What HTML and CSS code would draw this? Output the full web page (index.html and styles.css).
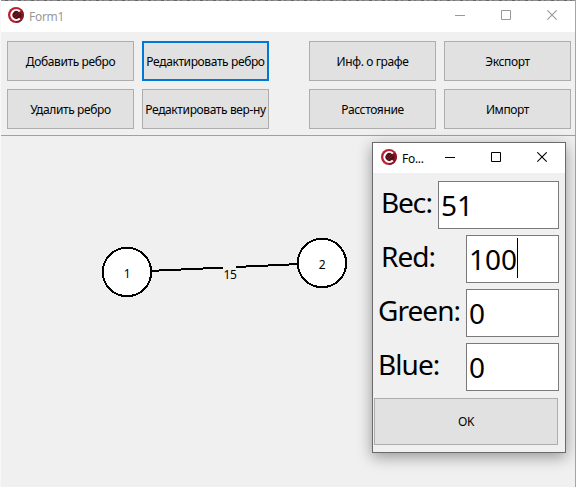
FILE: index.html
```
<!DOCTYPE html>
<html lang="ru">
<head>
<meta charset="utf-8">
<title>Form1</title>
<link rel="stylesheet" href="styles.css">
</head>
<body>
<svg width="0" height="0" class="defs">
  <symbol id="logo" viewBox="0 0 16 16">
    <circle cx="8" cy="8" r="8" fill="#b8202f"/>
    <path d="M14 3A8 8 0 0 1 8 16L8 13z" fill="#8a1624"/>
    <circle cx="9" cy="8" r="4.4" fill="#4d1018"/>
    <path d="M11.8 4.4A5 5 0 1 0 11.8 11.6" fill="none" stroke="#fff" stroke-width="2.1"/>
    <path d="M6 9l4-4M7 11l5-5" stroke="#8e2732" stroke-width=".7"/>
  </symbol>
  <symbol id="min" viewBox="0 0 11 11"><path d="M0 5.5H10" stroke="currentColor"/></symbol>
  <symbol id="max" viewBox="0 0 11 11"><path d="M.5 .5H9.5V9.5H.5z" fill="none" stroke="currentColor"/></symbol>
  <symbol id="close" viewBox="0 0 11 11"><path d="M.3 .3L9.7 9.7M9.7 .3L.3 9.7" stroke="currentColor" stroke-width="1.1"/></symbol>
</svg>
<div class="window">
  <header class="titlebar">
    <svg class="logo"><use href="#logo"/></svg>
    <span class="title">Form1</span>
    <div class="controls">
      <svg><use href="#min"/></svg><svg><use href="#max"/></svg><svg><use href="#close"/></svg>
    </div>
  </header>
  <section class="toolbar">
    <button><span>Добавить ребро</span></button>
    <button class="focused"><span>Редактировать ребро</span></button>
    <button class="third"><span>Инф. о графе</span></button>
    <button><span>Экспорт</span></button>
    <button><span>Удалить ребро</span></button>
    <button><span>Редактировать вер-ну</span></button>
    <button class="third"><span>Расстояние</span></button>
    <button><span>Импорт</span></button>
  </section>
  <svg class="graph" viewBox="1 136 574 351">
    <path d="M127 272L322 263" stroke="#000" stroke-width="2" shape-rendering="crispEdges"/>
    <rect x="223" y="265" width="13" height="17" fill="#f0f0f0"/>
    <g fill="#fff" stroke="#000" stroke-width="2" shape-rendering="crispEdges">
      <circle cx="127" cy="272" r="24.2"/><circle cx="322" cy="263" r="24.2"/>
    </g>
    <g class="labels"><text x="127" y="278">1</text><text x="322" y="269">2</text><text x="230" y="279">15</text></g>
  </svg>
</div>
<div class="dialog">
  <header class="titlebar">
    <svg class="logo"><use href="#logo"/></svg>
    <span class="title">Fo...</span>
    <div class="controls">
      <svg><use href="#min"/></svg><svg><use href="#max"/></svg><svg><use href="#close"/></svg>
    </div>
  </header>
  <div class="fields">
    <div class="row weight"><label>Вес:</label><div class="input">51</div></div>
    <div class="row red"><label>Red:</label><div class="input">100<i class="caret"></i></div></div>
    <div class="row green"><label>Green:</label><div class="input">0</div></div>
    <div class="row blue"><label>Blue:</label><div class="input">0</div></div>
  </div>
  <button class="ok"><span>OK</span></button>
</div>
</body>
</html>
```
FILE: styles.css
```
* { box-sizing: border-box; }
body {
  margin: 0;
  width: 576px;
  height: 487px;
  overflow: hidden;
  background: repeating-linear-gradient(90deg, #8f8c8e 0 5px, #656268 5px 8px, #99969a 8px 11px, #77727a 11px 13px) 0 0 / 100% 1px no-repeat, #f0f0f0;
  font-family: "Noto Sans", "Open Sans", sans-serif;
  color: #000;
}
.defs { position: absolute; }
.window {
  width: 576px;
  height: 487px;
  padding-top: 1px;
  border-right: 1px solid #a5a5a5;
  border-left: 1px solid #f8f8f8;
}
.titlebar {
  display: flex;
  align-items: center;
  height: 31px;
  padding-left: 7px;
  background: #fff;
  color: #999;
  font-size: 12px;
}
.logo { width: 16px; height: 16px; flex: none; margin-top: -3px; }
.title { margin: -1px 0 0 5px; letter-spacing: -.3px; white-space: nowrap; }
.controls { display: flex; gap: 35px; margin: -3px 17px 0 auto; }
.controls svg { width: 11px; height: 11px; display: block; }
.toolbar {
  display: grid;
  grid-template-columns: 127px 127px 159px 127px;
  grid-template-rows: 40px 40px;
  gap: 8px;
  height: 104px;
  padding: 9px 0 0 6px;
  border-bottom: 1px solid #a0a0a0;
}
button {
  display: flex;
  align-items: center;
  justify-content: center;
  padding: 0;
  border: 1px solid #adadad;
  border-radius: 0;
  background: #e1e1e1;
  color: #000;
  font: 12px "Noto Sans", "Open Sans", sans-serif;
  letter-spacing: -.38px;
  white-space: nowrap;
}
.focused { border: 2px solid #0078d7; }
.third { margin-left: 32px; }
.graph { display: block; width: 574px; height: 351px; }
.labels { font-size: 12px; text-anchor: middle; letter-spacing: -.4px; }
.dialog {
  position: absolute;
  left: 372px;
  top: 142px;
  width: 194px;
  height: 311px;
  border: 1px solid #6b696b;
  background: #f0f0f0;
  box-shadow: 0 4px 14px rgba(0, 0, 0, .38);
}
.dialog .titlebar { height: 30px; padding-left: 8px; color: #000; }
.dialog .logo { margin-top: -2px; }
.dialog .title { margin-top: 0; }
.dialog .controls { margin: -2px 17px 0 auto; }
.fields {
  display: flex;
  flex-direction: column;
  gap: 6px;
  padding: 8px 6px 0 5px;
}
.row { display: flex; justify-content: space-between; height: 48px; font-size: 28px; }
.row label { line-height: 42px; letter-spacing: -.95px; white-space: nowrap; }
.weight label, .red label { margin-left: 3px; }
.input {
  display: flex;
  align-items: center;
  width: 93px;
  padding: 0 0 0 2px;
  border: 1px solid #7a7a7a;
  background: #fff;
}
.weight .input { width: 121px; }
.caret { width: 1px; height: 40px; margin-top: -2px; background: #000; }
.ok { width: 184px; height: 47px; margin: 7px 0 0 1px; }
```
